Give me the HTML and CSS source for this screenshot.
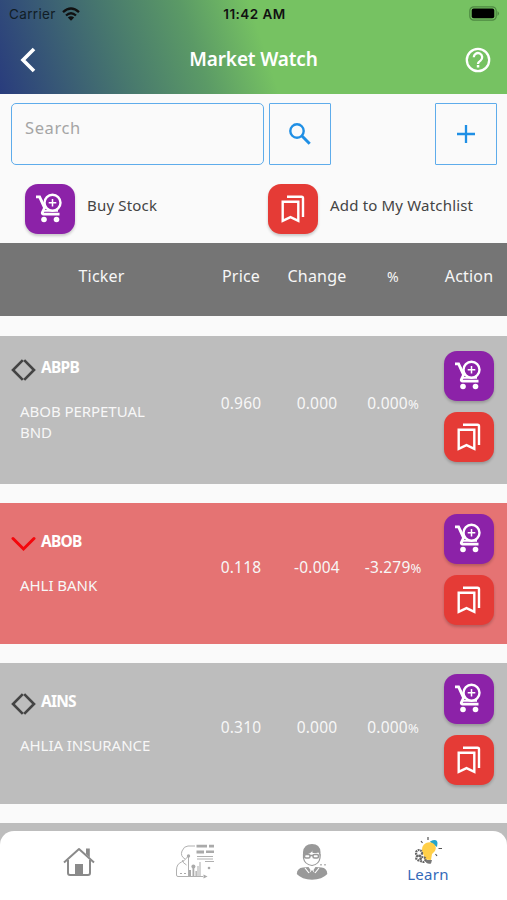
FILE: index.html
```html
<!DOCTYPE html>
<html lang="en">
<head>
<meta charset="utf-8">
<title>Market Watch</title>
<link rel="stylesheet" href="styles.css">
</head>
<body>
<svg class="defs" aria-hidden="true">
  <symbol id="cart" viewBox="0 0 28 30">
    <g fill="none" stroke="currentColor">
      <path stroke-width="2.800" d="M1 3.800h3.600l5 11-2.300 4.800q-.2 1.500 1.200 1.500H24.500"/>
      <path stroke-width="1.800" d="M9 17.800h14M6 6.500l4.500 9"/>
      <circle stroke-width="2.400" cx="17.500" cy="9.800" r="8"/>
      <path stroke-width="1.500" d="M17.500 6v7.600M13.700 9.800h7.600"/>
    </g>
    <circle fill="currentColor" cx="9" cy="26.500" r="2.800"/><circle fill="currentColor" cx="21.500" cy="26.500" r="2.800"/>
  </symbol>
  <symbol id="marks" viewBox="0 0 24 28">
    <path fill="none" stroke="currentColor" stroke-width="2.400" d="M1.700 6.700h15.600v19.200l-7.800-3.700-7.800 3.700zM6 1.800h14.500q1.500 0 1.500 1.500v18.800"/>
  </symbol>
  <symbol id="flat" viewBox="0 0 25 22">
    <path fill="none" stroke="#444" stroke-width="2.600" d="M11.800 1.200 2 11l9.800 9.800M13.200 1.200 23 11l-9.800 9.800"/>
  </symbol>
  <symbol id="down" viewBox="0 0 25 22">
    <path fill="none" stroke="#f5060b" stroke-width="3" stroke-linecap="round" d="M2 5.500l10.500 10.500L23 5.500"/>
  </symbol>
</svg>
<header class="top">
  <div class="status">
    <div class="carrier">Carrier
      <svg width="18" height="14" viewBox="0 0 18 14"><g fill="none" stroke="#111" stroke-width="2.300"><path d="M1 5.200q8-7.400 16 0M4 8.500q5-4.600 10 0"/></g><path fill="#111" d="M5.800 10.500q3.200-2.600 6.400 0L9 13.800z"/></svg>
    </div>
    <div class="clock">11:42 AM</div>
    <svg class="battery" width="31" height="15" viewBox="0 0 31 15"><rect x=".8" y=".8" width="26.400" height="13.400" rx="4" fill="none" stroke="#4d8841" stroke-width="1.200"/><rect x="2.700" y="2.600" width="22.600" height="9.600" rx="2" fill="#000"/><path d="M28.500 5q3 2.500 0 5z" fill="#4d8841"/></svg>
  </div>
  <div class="bar">
    <svg width="16" height="26" viewBox="0 0 16 26"><path d="M14 2 3 13l11 11" fill="none" stroke="#fff" stroke-width="3.600"/></svg>
    <h1>Market Watch</h1>
    <svg width="26" height="26" viewBox="0 0 26 26"><g fill="none" stroke="#fff" stroke-width="2.300"><circle cx="13" cy="13" r="11.200"/><path d="M8.800 10.300a4.200 4.200 0 1 1 6.700 3.300Q13 15.200 13 17"/></g><rect x="11.800" y="18" width="2.500" height="2.500" fill="#fff"/></svg>
  </div>
</header>
<main>
  <div class="tools">
    <div class="search">Search</div>
    <div class="tool"><svg width="24" height="24" viewBox="0 0 24 24"><g fill="none" stroke="#1f8fe5"><circle cx="9" cy="9" r="6.700" stroke-width="2.400"/><path stroke-width="3" d="M14 14l7.700 7.700"/></g></svg></div>
    <div class="tool add"><svg width="18" height="18" viewBox="0 0 18 18"><path d="M9 0v18M0 9h18" stroke="#1f8fe5" stroke-width="2.300"/></svg></div>
  </div>
  <div class="legend">
    <div class="item"><span class="btn buy"><svg><use href="#cart"/></svg></span><span>Buy Stock</span></div>
    <div class="item"><span class="btn watch"><svg><use href="#marks"/></svg></span><span>Add to My Watchlist</span></div>
  </div>
  <div class="grid head"><span>Ticker</span><span>Price</span><span>Change</span><span class="pct">%</span><span>Action</span></div>
  <div class="grid row tall">
    <div class="stock"><div class="sym"><svg><use href="#flat"/></svg>ABPB</div><div class="name">ABOB PERPETUAL BND</div></div>
    <span class="val">0.960</span><span class="val">0.000</span><span class="val">0.000<small>%</small></span>
    <div class="acts"><span class="btn buy"><svg><use href="#cart"/></svg></span><span class="btn watch"><svg><use href="#marks"/></svg></span></div>
  </div>
  <div class="grid row loss">
    <div class="stock"><div class="sym"><svg><use href="#down"/></svg>ABOB</div><div class="name">AHLI BANK</div></div>
    <span class="val">0.118</span><span class="val">-0.004</span><span class="val">-3.279<small>%</small></span>
    <div class="acts"><span class="btn buy"><svg><use href="#cart"/></svg></span><span class="btn watch"><svg><use href="#marks"/></svg></span></div>
  </div>
  <div class="grid row">
    <div class="stock"><div class="sym"><svg><use href="#flat"/></svg>AINS</div><div class="name">AHLIA INSURANCE</div></div>
    <span class="val">0.310</span><span class="val">0.000</span><span class="val">0.000<small>%</small></span>
    <div class="acts"><span class="btn buy"><svg><use href="#cart"/></svg></span><span class="btn watch"><svg><use href="#marks"/></svg></span></div>
  </div>
</main>
<footer class="foot">
  <nav>
    <div class="tab"><svg width="32" height="30" viewBox="0 0 32 30"><g fill="none" stroke="#8a8a8a" stroke-width="2" stroke-linejoin="round"><path d="M1 15.500 16 2l15 13.500M5 13v13q0 2 2 2h18q2 0 2-2V13"/></g><path fill="#8a8a8a" d="M12 28V17h8v11zM23 1.500h3.800v9L23 7z"/></svg></div>
    <div class="tab"><svg width="40" height="36" viewBox="0 0 40 36"><g fill="none" stroke="#b0b0b0" stroke-width="1"><path d="M28 32.500H3q-1.500 0-1.500-1.500v-5q0-6 5-8 3-1 5-4l2-2V32M11.500 21q-4-2-4-5M10 15Q5 12 7 7q2-5 6-5h7M22 12.500h16M22 15h16M30 17.500h9"/></g><g fill="#aaa"><path d="M21.500.8H32v2.700H21.500zM34 .8h5v2.700h-5zM21.500 6.500H29v3h-7.500zM31 6.500h8V9h-8z"/><path d="M14 26h2v6h-2zM17.500 23h1.800v9h-1.800zM20.500 27h1.300v5h-1.300zM22.500 22h1v10h-1zM24.500 18h1v14h-1zM28.500 30.500l4 2-4 2zM5 29h2v1H5zM9 29h2v1H9z"/><circle cx="13.500" cy="12" r="1.700"/><circle cx="18.400" cy="22.500" r="2"/><circle cx="34" cy="24" r="1.300"/></g></svg></div>
    <div class="tab"><svg width="32" height="37" viewBox="0 0 32 37"><path fill="#999" d="M7 13V9Q8 1 16 1q8 0 8.500 8v5l-2-4.500Q14 11.500 17 7q-2 4-8 4.500z"/><path fill="none" stroke="#999" stroke-width="1.200" d="M7.500 11v4q1 6.500 8.500 7.500 7-1 8-7.500v-4"/><g fill="none" stroke="#999" stroke-width="1.500"><rect x="8.500" y="11.500" width="5.500" height="3.500" rx="1.500"/><rect x="17" y="11.500" width="5.500" height="3.500" rx="1.500"/><path d="M14 12.500h3"/></g><path fill="#999" d="M.8 31q.2-6 6.200-6.500L12.500 24l2 3-1 3 2.500-3 2.500 3-1-3 2-3 6 .5q5.600.5 5.800 6.500-5 5.500-15.300 5.700Q5.800 36.500.8 31z"/><path stroke="#fff" stroke-width="1.200" fill="none" d="m9 25 4 5m10-5-4 5"/><path fill="#bbb" d="M24 21h2v1.500h-2zM28 21h2v1.500h-2z"/></svg></div>
    <div class="tab learn"><svg width="28" height="29" viewBox="0 0 28 29"><path fill="#25a5c9" d="M16 4.500q7-3.500 7.500 1.500l-.5 4-6-4z"/><path fill="#ffcf48" d="M12 6q5-2 8 1 3 3 1 7l-3 3-1 6-7-.5q1-3-1.500-6.500Q6.500 9 12 6z"/><g fill="none" stroke="#666" stroke-width="2.200" stroke-dasharray="1.800 .7"><circle cx="5" cy="16" r="3"/><circle cx="4.500" cy="21" r="2.300"/><circle cx="9" cy="22.500" r="2.500"/></g><path fill="#777" d="M12 23h6l-1 3.500q-2.500 1-5-1z"/><path stroke="#555" stroke-width="1.200" d="M14 0v3M7 4l1.500 2M24.500 11.500H28M21.500 17l1.500 2"/></svg><span>Learn</span></div>
  </nav>
</footer>
</body>
</html>
```
FILE: styles.css
```css
* { box-sizing: border-box; }
body {
  margin: 0;
  height: 900px;
  overflow: hidden;
  display: flex;
  flex-direction: column;
  background: #fafafa;
  font-family: "Noto Sans", sans-serif;
  font-size: 15px;
  color: #444;
}
svg { display: block; flex: none; }
.defs { position: absolute; width: 0; height: 0; }
.top {
  flex: none;
  height: 94px;
  background: linear-gradient(72deg, #293c7d 0%, #47776e 24%, #5b9a66 39%, #76c262 52%);
}
.status {
  height: 28px;
  padding: 0 7px 0 9px;
  display: grid;
  grid-template-columns: 1fr auto 1fr;
  align-items: center;
  font: 13.5px/28px Inter, sans-serif;
  color: #111d25;
}
.carrier { display: flex; gap: 6px; align-items: center; letter-spacing: .35px; }
.clock { font-weight: 600; color: #111; font-size: 13.5px; letter-spacing: .45px; }
.battery { justify-self: end; margin-top: -2px; }
.bar {
  height: 64px;
  padding: 0 16px 0 20px;
  display: flex;
  justify-content: space-between;
  align-items: center;
}
.bar h1 { margin: 0; padding: 0 0 3px 6px; font-size: 19px; font-weight: 600; line-height: 26px; letter-spacing: -.15px; color: #fff; }
.tools { display: flex; height: 71px; padding: 9px 10px 0 11px; }
.search,
.tool {
  height: 62px;
  border: 1.5px solid #5eaceb;
}
.search {
  width: 253px;
  padding: 13px;
  border-radius: 5px;
  font-size: 16.5px;
  line-height: 22px;
  letter-spacing: .6px;
  color: #a5a5a5;
}
.tool {
  width: 62px;
  margin-left: 5px;
  display: flex;
  align-items: center;
  justify-content: center;
  border-radius: 1px;
}
.add { margin-left: auto; }
.legend {
  height: 78px;
  padding: 19px 0 0 25px;
  display: grid;
  grid-template-columns: 243px 1fr;
  letter-spacing: .18px;
}
.item { display: flex; gap: 12px; height: 50px; align-items: center; }
.item span:last-child { padding-bottom: 8px; white-space: nowrap; }
.btn {
  width: 50px;
  height: 50px;
  flex: none;
  display: flex;
  align-items: center;
  justify-content: center;
  border-radius: 13px;
  color: #fff;
  box-shadow: 0 2px 3px #0003;
}
.buy { background: #8c22a8; }
.watch { background: #e53b36; }
.buy svg { width: 28px; height: 30px; margin-left: -2px; margin-top: -2px; }
.watch svg { width: 24px; height: 28px; }
.grid { display: grid; grid-template-columns: 203px repeat(4, 76px); align-items: center; text-align: center; color: #f7f7f7; }
.head { height: 73px; padding-bottom: 7px; background: #757575; font-size: 16px; letter-spacing: .2px; }
.head .pct { font-size: 14px; }
.row { height: 141px; margin-top: 19px; padding-bottom: 8px; background: #bdbdbd; }
.tall { height: 148px; margin-top: 20px; }
.loss { background: #e57373; }
.stock { text-align: left; padding-bottom: 15px; }
.sym { display: flex; align-items: center; height: 24px; gap: 5px; padding-left: 11px; font-weight: 700; font-size: 15.5px; letter-spacing: -.75px; color: #fff; }
.sym svg { width: 25px; height: 22px; margin-top: 6px; }
.name { margin: 22px 40px 0 20px; line-height: 21px; letter-spacing: -.05px; }
.val { padding-bottom: 6px; font-size: 15.5px; letter-spacing: .2px; }
.val small { font-size: 13px; letter-spacing: 0; }
.acts { display: flex; flex-direction: column; gap: 11px; align-items: center; }
.foot { margin-top: 19px; padding-top: 8px; background: #bdbdbd; }
nav { height: 69px; display: flex; justify-content: space-between; padding: 0 21px 8px; background: #fff; border-radius: 14px 14px 0 0; }
.tab { width: 116px; display: flex; flex-direction: column; align-items: center; justify-content: center; }
.learn { color: #3469b8; letter-spacing: .3px; line-height: 20px; padding-bottom: 3px; }
.learn svg { margin-bottom: -2px; }
```
